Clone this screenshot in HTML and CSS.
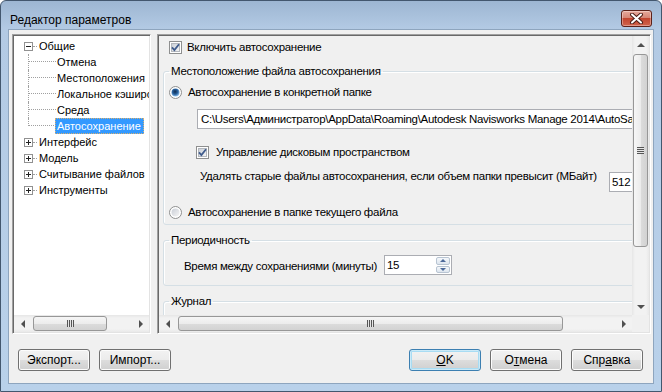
FILE: index.html
```html
<!DOCTYPE html>
<html>

<head>
    <meta charset="utf-8" />
    <title>Редактор параметров</title>
    <link rel="stylesheet" href="styles.css">
</head>

<body>
    <div class="window">
        <div class="titlebar">
            <span class="title">Редактор параметров</span>
            <span class="close">
                <svg width="15" height="11" viewBox="0 0 15 11">
                    <path d="M3 1.5 L12 9.5 M12 1.5 L3 9.5" stroke="#4a1d16" stroke-width="4" stroke-linecap="round" />
                    <path d="M3 1.5 L12 9.5 M12 1.5 L3 9.5" stroke="#fff" stroke-width="2" stroke-linecap="round" />
                </svg>
            </span>
        </div>

        <div class="client">
            <div class="panes">
                <!-- tree on the left -->
                <div class="tree sunken">
                    <div class="tree-body">
                        <div class="node">
                            <svg class="exp" width="9" height="9"><rect x=".5" y=".5" width="8" height="8" fill="#fff" stroke="#919191" /><path d="M2 4.5h5" stroke="#222" /></svg>
                            <span class="hline"></span><span class="lbl">Общие</span>
                        </div>
                        <div class="node child"><span class="branch"><span class="half"></span></span><span class="lbl">Отмена</span></div>
                        <div class="node child"><span class="branch"><span class="half"></span></span><span class="lbl">Местоположения</span></div>
                        <div class="node child"><span class="branch"><span class="half"></span></span><span class="lbl">Локальное кэширование</span></div>
                        <div class="node child"><span class="branch"><span class="half"></span></span><span class="lbl">Среда</span></div>
                        <div class="node child last"><span class="branch"><span class="half"></span></span><span class="lbl selected">Автосохранение</span></div>
                        <div class="node">
                            <svg class="exp" width="9" height="9"><rect x=".5" y=".5" width="8" height="8" fill="#fff" stroke="#919191" /><path d="M2 4.5h5M4.5 2v5" stroke="#222" /></svg>
                            <span class="hline"></span><span class="lbl">Интерфейс</span>
                        </div>
                        <div class="node">
                            <svg class="exp" width="9" height="9"><rect x=".5" y=".5" width="8" height="8" fill="#fff" stroke="#919191" /><path d="M2 4.5h5M4.5 2v5" stroke="#222" /></svg>
                            <span class="hline"></span><span class="lbl">Модель</span>
                        </div>
                        <div class="node">
                            <svg class="exp" width="9" height="9"><rect x=".5" y=".5" width="8" height="8" fill="#fff" stroke="#919191" /><path d="M2 4.5h5M4.5 2v5" stroke="#222" /></svg>
                            <span class="hline"></span><span class="lbl">Считывание файлов</span>
                        </div>
                        <div class="node">
                            <svg class="exp" width="9" height="9"><rect x=".5" y=".5" width="8" height="8" fill="#fff" stroke="#919191" /><path d="M2 4.5h5M4.5 2v5" stroke="#222" /></svg>
                            <span class="hline"></span><span class="lbl">Инструменты</span>
                        </div>
                    </div>
                    <div class="hscroll">
                        <span class="arrow left"></span>
                        <span class="thumb tree-thumb"><span class="grip"></span></span>
                        <span class="track"></span>
                        <span class="arrow right"></span>
                    </div>
                </div>

                <!-- options page -->
                <div class="panel sunken">
                    <div class="view">
                        <div class="content">
                            <div class="check-row top">
                                <svg class="box" width="13" height="13"><use href="#chk" /></svg>
                                <span>Включить автосохранение</span>
                            </div>

                            <fieldset class="group first">
                                <legend>Местоположение файла автосохранения</legend>
                                <div class="radio-row">
                                    <svg class="box" width="13" height="13"><use href="#radio-on" /></svg>
                                    <span>Автосохранение в конкретной папке</span>
                                </div>
                                <div class="path">C:\Users\Администратор\AppData\Roaming\Autodesk Navisworks Manage 2014\AutoSave</div>
                                <div class="check-row disk">
                                    <svg class="box" width="13" height="13"><use href="#chk" /></svg>
                                    <span>Управление дисковым пространством</span>
                                </div>
                                <div class="size-row">
                                    <span class="size-label">Удалять старые файлы автосохранения, если объем папки превысит (МБайт)</span>
                                    <span class="field size">512</span>
                                </div>
                                <div class="radio-row second">
                                    <svg class="box" width="13" height="13"><use href="#radio-off" /></svg>
                                    <span>Автосохранение в папке текущего файла</span>
                                </div>
                            </fieldset>

                            <fieldset class="group period">
                                <legend>Периодичность</legend>
                                <div class="time-row">
                                    <span class="time-label">Время между сохранениями (минуты)</span>
                                    <span class="field spin">
                                        <span class="spin-value">15</span>
                                        <span class="spin-btns">
                                            <span class="spin-btn"><span class="tri up"></span></span>
                                            <span class="spin-btn"><span class="tri down"></span></span>
                                        </span>
                                    </span>
                                </div>
                            </fieldset>

                            <fieldset class="group journal">
                                <legend>Журнал</legend>
                            </fieldset>
                        </div>
                    </div>
                    <div class="vscroll">
                        <span class="arrow up"></span>
                        <span class="thumb v-thumb"><span class="grip"></span></span>
                        <span class="track"></span>
                        <span class="arrow down"></span>
                    </div>
                    <div class="hscroll">
                        <span class="arrow left"></span>
                        <span class="thumb page-thumb"><span class="grip"></span></span>
                        <span class="track"></span>
                        <span class="arrow right"></span>
                    </div>
                    <div class="corner"></div>
                </div>
            </div>

            <div class="buttons">
                <button>Экспорт...</button>
                <button>Импорт...</button>
                <span class="spacer"></span>
                <button class="default"><u>O</u>K</button>
                <button>О<u>т</u>мена</button>
                <button>Спр<u>а</u>вка</button>
            </div>
        </div>
    </div>

    <svg width="0" height="0" class="defs">
        <defs>
            <linearGradient id="boxfill" x1="0" y1="0" x2="1" y2="1">
                <stop offset="0" stop-color="#c9ced6" />
                <stop offset="1" stop-color="#f6f6f6" />
            </linearGradient>
            <radialGradient id="dot" cx=".45" cy=".4" r=".6">
                <stop offset="0" stop-color="#0c2a4f" />
                <stop offset=".55" stop-color="#28609c" />
                <stop offset="1" stop-color="#8cc0ee" />
            </radialGradient>
            <g id="chk">
                <rect x=".5" y=".5" width="12" height="12" fill="#fff" stroke="#8e8f8f" />
                <rect x="2.5" y="2.5" width="8" height="8" fill="url(#boxfill)" stroke="#b3b7bd" />
                <path d="M3 6.3 L5.4 9 L10 3.2" fill="none" stroke="#3f5b8c" stroke-width="1.8" />
            </g>
            <g id="radio-off">
                <circle cx="6.5" cy="6.5" r="6" fill="#fff" stroke="#8e8f8f" />
                <circle cx="6.5" cy="6.5" r="4" fill="url(#boxfill)" />
            </g>
            <g id="radio-on">
                <circle cx="6.5" cy="6.5" r="6" fill="#fff" stroke="#8e8f8f" />
                <circle cx="6.5" cy="6.5" r="4" fill="url(#dot)" />
            </g>
        </defs>
    </svg>
</body>

</html>
```

FILE: styles.css
```css
* {
    box-sizing: border-box;
}

body {
    margin: 0;
    width: 662px;
    height: 392px;
    overflow: hidden;
    font-family: "Liberation Sans", Arial, sans-serif;
    font-size: 12px;
    color: #000;
    background: #fff;
}

.defs {
    position: absolute;
}

.window {
    width: 662px;
    height: 392px;
    border: 1px solid #43576e;
    border-radius: 6px 6px 0 0;
    background: linear-gradient(#9db6d2, #b3cae4 28px, #b9d1ea);
    padding: 0 7px 7px 7px;
    display: flex;
    flex-direction: column;
}

/* title bar */

.titlebar {
    height: 29px;
    display: flex;
    align-items: flex-start;
}

.title {
    margin: 11px 0 0 2px;
    line-height: 16px;
    flex: 1;
}

.close {
    width: 31px;
    height: 17px;
    margin: 9px 2px 0 0;
    border: 1px solid #5c2119;
    border-radius: 3px;
    background: linear-gradient(#e7a99c, #d68676 45%, #c2452f 50%, #d0644c);
    box-shadow: inset 0 0 0 1px rgba(255, 255, 255, 0.35);
    display: flex;
    align-items: center;
    justify-content: center;
}

/* client area */

.client {
    flex: 1;
    background: #f0f0f0;
    border: 1px solid #8ea5be;
    padding: 4px 2px 12px 3px;
    display: flex;
    flex-direction: column;
}

.panes {
    height: 300px;
    display: flex;
    gap: 6px;
}

.sunken {
    border: 1px solid;
    border-color: #a0a0a0 #fff #fff #a0a0a0;
    padding: 1px;
    box-shadow: inset 1px 1px #696969, inset -1px -1px #e3e3e3;
}

/* tree */

.tree {
    width: 139px;
    background: #fff;
    display: flex;
    flex-direction: column;
}

.tree-body {
    flex: 1;
    overflow: hidden;
    padding-top: 2px;
    font-size: 11px;
}

.node {
    height: 16px;
    display: flex;
    align-items: center;
    padding-left: 10px;
    white-space: nowrap;
}

.exp {
    flex: none;
}

.hline {
    width: 4px;
    height: 1px;
    border-top: 1px dotted #a0a0a0;
    flex: none;
}

.lbl {
    padding: 0 2px 0 1px;
    line-height: 14px;
    border: 1px solid transparent;
}

.child {
    padding-left: 14px;
}

.branch {
    width: 28px;
    height: 16px;
    align-self: stretch;
    border-left: 1px dotted #a0a0a0;
    flex: none;
}

.half {
    display: block;
    width: 100%;
    height: 8px;
    border-bottom: 1px dotted #a0a0a0;
}

.child.last .branch {
    border-left: none;
}

.child.last .half {
    border-left: 1px dotted #a0a0a0;
}

.child .lbl {
    margin-left: -1px;
}

.lbl.selected {
    background: #3399ff;
    color: #fff;
    border: 1px dotted #d8b070;
}

/* scroll bars */

.hscroll {
    height: 17px;
    display: flex;
    align-items: center;
    background: linear-gradient(#e6e6e6, #f2f2f2 3px, #f2f2f2 14px, #e9e9e9);
}

.vscroll {
    width: 17px;
    display: flex;
    flex-direction: column;
    align-items: center;
    background: linear-gradient(90deg, #e6e6e6, #f2f2f2 3px, #f2f2f2 14px, #e9e9e9);
}

.track {
    flex: 1;
}

.arrow {
    flex: none;
    width: 17px;
    height: 17px;
    display: flex;
    align-items: center;
    justify-content: center;
}

.arrow::after {
    content: "";
    border: 4px solid transparent;
}

.arrow.left::after {
    border-right: 4px solid #505050;
    border-left-width: 0;
}

.arrow.right::after {
    border-left: 4px solid #505050;
    border-right-width: 0;
}

.arrow.up::after {
    border-bottom: 4px solid #505050;
    border-top-width: 0;
}

.arrow.down::after {
    border-top: 4px solid #505050;
    border-bottom-width: 0;
}

.thumb {
    flex: none;
    border: 1px solid #979797;
    border-radius: 3px;
    display: flex;
    align-items: center;
    justify-content: center;
}

.hscroll .thumb {
    height: 15px;
    background: linear-gradient(#f6f6f6, #ececec 50%, #dcdcdc 51%, #d2d2d2);
}

.hscroll .grip {
    width: 7px;
    height: 7px;
    background: repeating-linear-gradient(90deg, #555 0 1px, #e6e6e6 1px 2px);
}

.vscroll .thumb {
    width: 15px;
    background: linear-gradient(90deg, #f6f6f6, #ececec 50%, #dcdcdc 51%, #d2d2d2);
}

.vscroll .grip {
    width: 7px;
    height: 7px;
    background: repeating-linear-gradient(#555 0 1px, #e6e6e6 1px 2px);
}

.tree-thumb {
    width: 74px;
    margin-left: 2px;
}

.page-thumb {
    width: 385px;
    margin-left: 2px;
}

.v-thumb {
    height: 193px;
    margin-top: 1px;
}

/* options page */

.panel {
    flex: 1;
    background: #f0f0f0;
    display: grid;
    grid-template-columns: 1fr 17px;
    grid-template-rows: 1fr 17px;
}

.view {
    overflow: hidden;
}

.content {
    width: 640px;
    padding-top: 1px;
    font-size: 11.5px;
    letter-spacing: -0.3px;
}

.check-row,
.radio-row {
    display: flex;
    align-items: center;
    white-space: nowrap;
}

.check-row.top {
    height: 20px;
    padding-left: 10px;
    gap: 5px;
}

.group {
    margin: 6px 0 0 4px;
    width: 620px;
    border: 1px solid #d5dfe5;
    border-radius: 3px;
    box-shadow: inset 1px 1px #fff;
    padding: 0 0 4px 5px;
}

.group legend {
    padding: 0 2px;
    line-height: 16px;
    height: 16px;
}

.radio-row {
    height: 16px;
    margin-top: 5px;
    gap: 6px;
}

.radio-row.second {
    margin-top: 12px;
}

.path {
    margin: 9px 0 0 28px;
    height: 20px;
    width: 560px;
    border: 1px solid #abadb3;
    background: #fff;
    padding-left: 3px;
    line-height: 18px;
    white-space: nowrap;
    overflow: hidden;
}

.check-row.disk {
    height: 16px;
    margin-top: 15px;
    padding-left: 27px;
    gap: 7px;
}

.size-row {
    margin-top: 8px;
    padding-left: 31px;
    display: flex;
    align-items: flex-start;
}

.size-label,
.time-label {
    line-height: 16px;
    white-space: nowrap;
    flex: none;
}

.size-label {
    width: 409px;
}

.field {
    height: 20px;
    border: 1px solid #abadb3;
    background: #fff;
    line-height: 18px;
}

.size {
    width: 40px;
    margin-top: 4px;
    padding-left: 2px;
}

.period {
    margin-top: 7px;
    padding-bottom: 10px;
}

.time-row {
    margin-top: 7px;
    padding-left: 15px;
    height: 20px;
    display: flex;
    align-items: center;
}

.time-label {
    width: 200px;
    padding-top: 2px;
}

.spin {
    width: 68px;
    display: flex;
    justify-content: space-between;
}

.spin-value {
    padding-left: 2px;
}

.spin-btns {
    width: 16px;
    padding: 1px;
    display: flex;
    flex-direction: column;
    gap: 1px;
}

.spin-btn {
    flex: 1;
    border: 1px solid #b8c4d2;
    border-radius: 2px;
    background: linear-gradient(#f5f8fb, #dde5ee);
    display: flex;
    align-items: center;
    justify-content: center;
}

.tri {
    border: 3px solid transparent;
}

.tri.up {
    border-bottom: 3px solid #4d6a9a;
    border-top-width: 0;
}

.tri.down {
    border-top: 3px solid #4d6a9a;
    border-bottom-width: 0;
}

.journal {
    margin-top: 7px;
    height: 40px;
}

/* dialog buttons */

.buttons {
    margin-top: 15px;
    padding: 0 8px 0 6px;
    display: flex;
    gap: 9px;
}

.spacer {
    flex: 1;
}

button {
    width: 72px;
    height: 22px;
    padding: 0;
    font-family: "Liberation Sans", Arial, sans-serif;
    font-size: 12px;
    color: #000;
    border: 1px solid #707070;
    border-radius: 3px;
    background: linear-gradient(#f2f2f2, #ebebeb 50%, #dddddd 51%, #cfcfcf);
    box-shadow: inset 0 0 0 1px #fcfcfc;
}

button.default {
    border-color: #3c7fb1;
    box-shadow: inset 0 0 0 1px #cbeaf8, inset 0 0 0 2px #a8dcf3;
}
```
